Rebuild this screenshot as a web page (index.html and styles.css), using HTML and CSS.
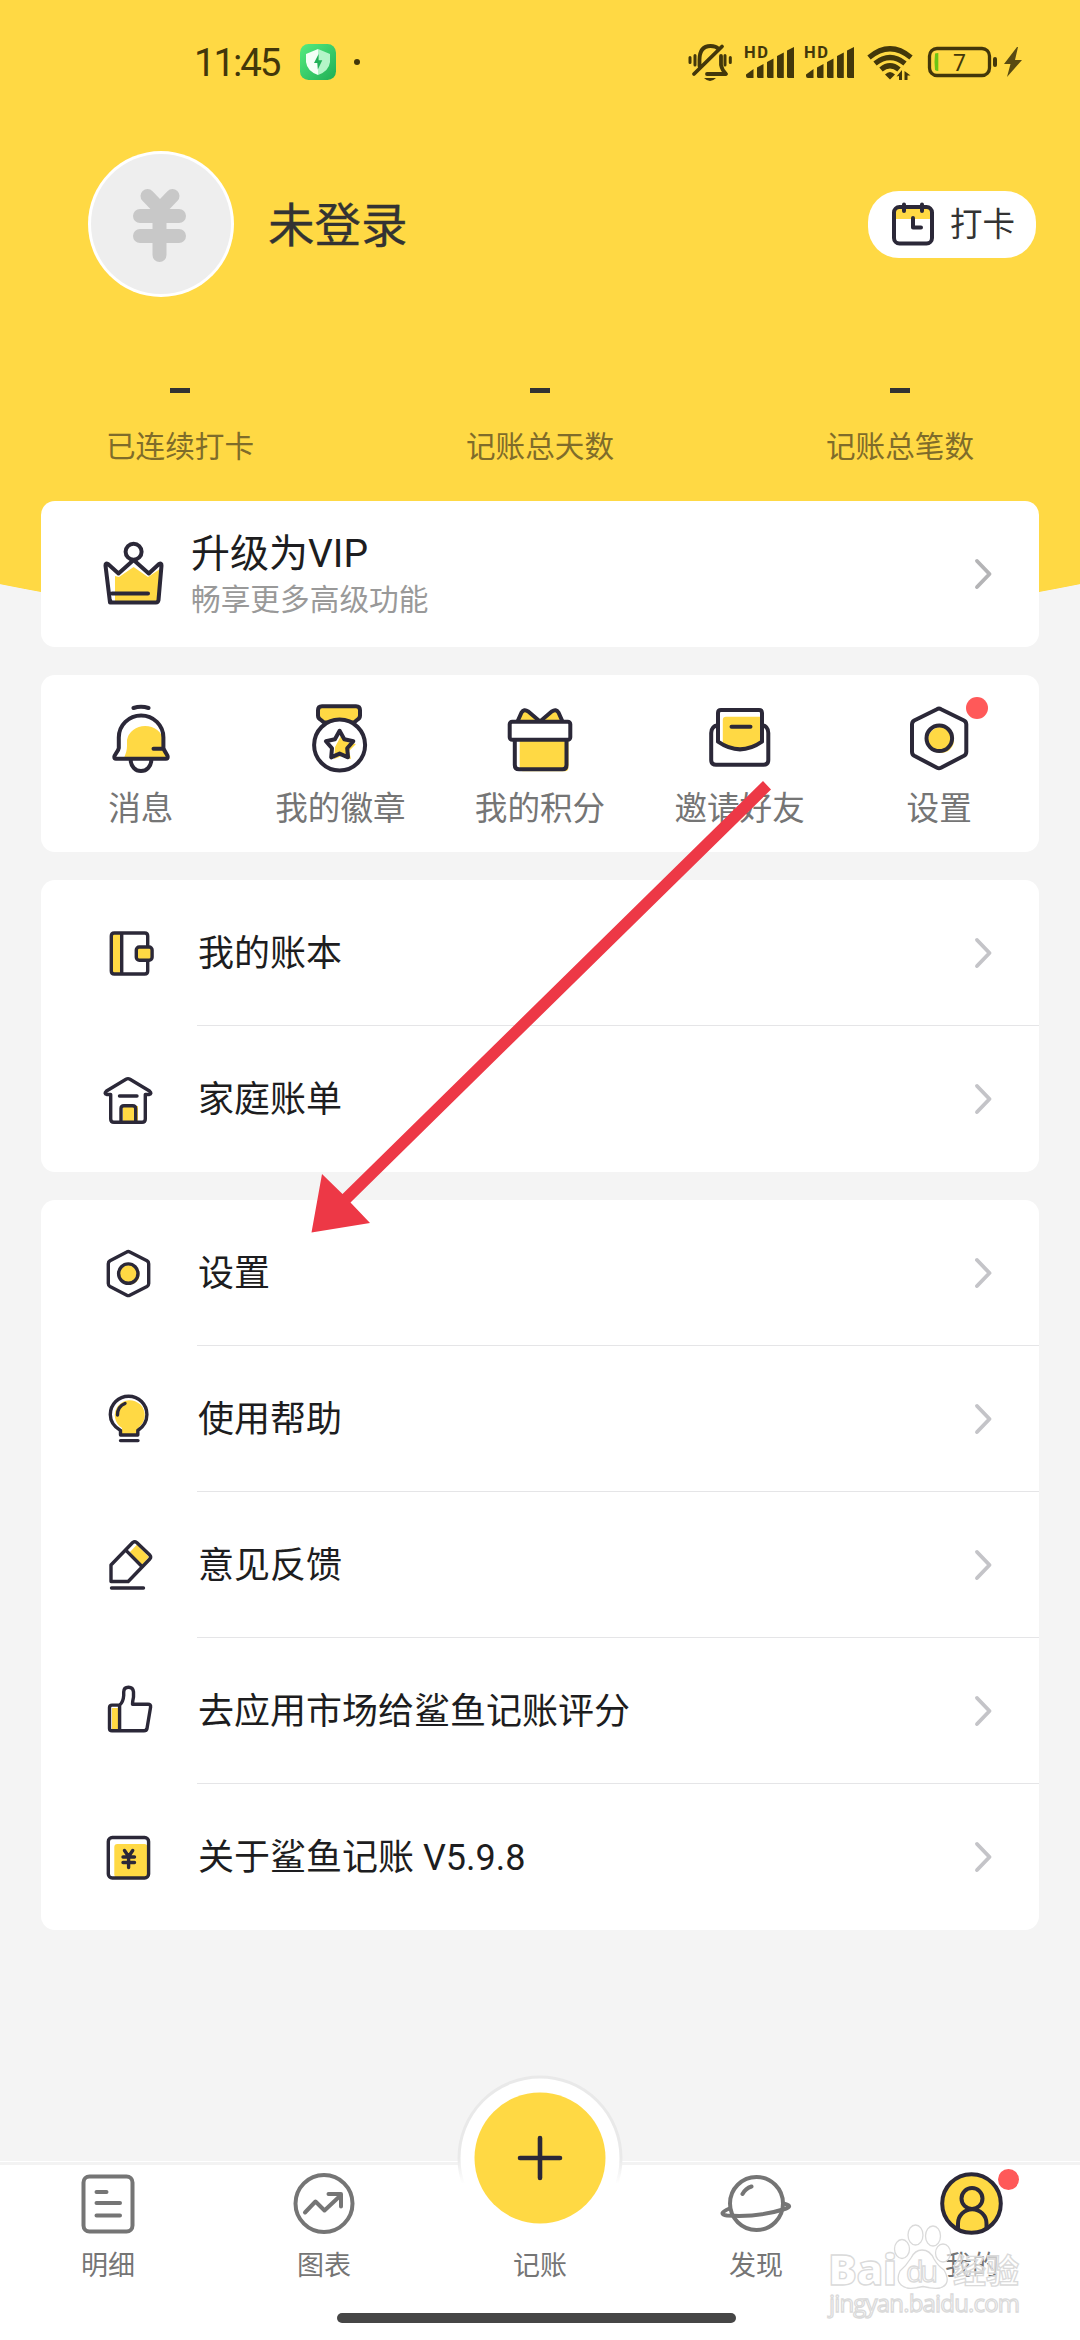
FILE: index.html
```html
<!DOCTYPE html>
<html lang="zh-CN">
<head>
<meta charset="utf-8">
<title>我的</title>
<link rel="stylesheet" href="styles.css">
</head>
<body>
<svg class="defs" width="0" height="0" aria-hidden="true">
  <symbol id="chevron" viewBox="0 0 20 34"><path d="M4 4 L16.500 17 L4 30" fill="none" stroke="currentColor" stroke-width="3.900" stroke-linecap="round" stroke-linejoin="round"/></symbol>
</svg>
<div class="page">
  <header class="status">
    <span class="time">11:45</span>
    <svg class="guard" viewBox="0 0 36 36">
      <defs><linearGradient id="g" x1="0" y1="0" x2="1" y2="1"><stop offset="0" stop-color="#55ec80"/><stop offset="1" stop-color="#1fae55"/></linearGradient></defs>
      <rect width="36" height="36" rx="8.500" fill="url(#g)"/>
      <path d="M18 5 L30 10 V18 Q29 27 18 31 Z" fill="#b4f5c8"/>
      <path d="M18 5 L6 10 V18 Q7 27 18 31 Z" fill="#f4fff7"/>
      <path d="M18.600 10 L14 19 H17.300 L17.800 25.500 L22.300 16.300 H18.600 Z" fill="#21b158"/>
    </svg>
    <i class="more"></i>
    <svg class="signals" viewBox="0 0 336 44" fill="none" stroke="#43370a" stroke-width="3.800" stroke-linecap="round" stroke-linejoin="round">
      <path d="M11.500 26 V20 Q11.500 6 22.500 6 Q28 6 30.500 9 M33 16 V25 Q34 30 38 34 H19 M6 34 L34 6.500"/>
      <path d="M2 17.500 V22.500 M7 15.500 V25 M37 15.500 V25 M42.300 17.500 V22.500" stroke-width="3"/>
      <path d="M16 38 H28 Q22 44 16 38 Z" fill="#43370a" stroke="none"/>
      <g fill="#43370a" stroke="none">
        <g id="bars">
          <text x="56" y="18" class="hd" textLength="24">HD</text>
          <path d="M58 36 V34.500 L65.500 29 V38 H60 Q58 38 58 36Z M69 37 V27.500 L75.500 24 V38 H70Z M79 37 V22 L85.500 18.500 V38 H80Z M89 37 V16 L95.800 12.500 V38 H90Z M99 37 V10.500 L106 7 V38 H100Z"/>
        </g>
        <use href="#bars" x="60"/>
      </g>
      <path d="M181 17.500 Q202 0 223 17.500 M187 23.500 Q202 11.500 217 23.500 M193 29.500 Q202 22 211 29.500" stroke-width="5.200" stroke-linecap="butt"/>
      <path d="M197 34.500 Q202 29.500 207 34.500 L202 39.500 Z M214 30 V40 H211 V36 L208.500 36.500 Z M216.500 40 V31 L222.500 35.500 H219.500 V40Z" fill="#43370a" stroke="none"/>
      <rect x="241.500" y="8.500" width="60" height="27" rx="7.500" stroke-width="3.300"/>
      <path d="M247 13.500 Q248 13 250.300 13 V31 Q248 31 247 30 Q246 22 247 13.500Z" fill="#6cc414" stroke="none"/>
      <rect x="305" y="17" width="4" height="10" rx="2" fill="#43370a" stroke="none"/>
      <text x="265" y="31" class="level">7</text>
      <path d="M329 7 L316 24 H322.500 L319 37 L334 20 H327 L330 7Z" fill="#584a12" stroke="none"/>
    </svg>
  </header>

  <section class="profile">
    <svg class="avatar" viewBox="0 0 146 146">
      <circle cx="73" cy="73" r="73" fill="#fff"/><circle cx="73" cy="73" r="70" fill="#eee"/>
      <path d="M59.500 45 L72 58 L84.500 45 M71.500 58 V104 M52 65 H91 M52 85 H91" fill="none" stroke="#c8c8c8" stroke-width="14" stroke-linecap="round"/>
    </svg>
    <h1 class="name">未登录</h1>
    <button class="checkin">
      <svg viewBox="0 0 44 46" fill="none" stroke="#2b2838" stroke-width="4" stroke-linecap="round" stroke-linejoin="round">
        <path d="M4 6 H40 V18 H4Z" fill="#ffd944" stroke="none"/>
        <rect x="3" y="6" width="38" height="36.500" rx="5.500"/>
        <path d="M13 3.500 V10 M31 3.500 V10 M22 17 V26.500 H30"/>
      </svg>
      <span>打卡</span>
    </button>
  </section>

  <section class="stats">
    <div><i></i><span>已连续打卡</span></div>
    <div><i></i><span>记账总天数</span></div>
    <div><i></i><span>记账总笔数</span></div>
  </section>

  <main class="cards">
    <section class="card vip">
      <svg class="crown" viewBox="0 0 70 70" fill="none" stroke="#2b2838" stroke-width="4" stroke-linecap="round" stroke-linejoin="round">
        <path d="M17 37 L21 38 L35.600 28 L50 38 L62 30 L60 62 H17Z" fill="#ffd944" stroke="none"/>
        <circle cx="35.600" cy="12.800" r="8"/>
        <path d="M12 63.500 L7.500 26.500 Q7.300 23.500 10 25 L20.500 34.500 L35.600 21 L50.800 34.500 L61 25 Q63.700 23.500 63.500 26.500 L60.500 61 Q60 63.500 58 63.500 H14.500 Q12.200 63.500 12 61 M14 54.500 H50"/>
      </svg>
      <div class="vip-text"><strong>升级为VIP</strong><span>畅享更多高级功能</span></div>
      <svg class="chev"><use href="#chevron"/></svg>
    </section>

    <nav class="card shortcuts">
      <a>
        <svg class="ico" viewBox="0 0 72 72">
          <path d="M22 44 V38 A18.400 16.500 0 0 1 58.400 38 V47 L62 56 H19 C21 51 22 48 22 44Z" class="y"/>
          <path d="M28.500 6 Q36 3.500 43.500 6 M13.800 46 V35.500 A22.300 22 0 0 1 58.400 35.500 V46 C59 49 62.700 52.500 62.700 54.800 Q62.700 56.800 61 56.800 H11 Q9.300 56.800 9.300 54.800 C9.300 52.500 13.500 49 13.800 46Z M25.700 58 A10.300 11 0 0 0 46.300 58 M48.500 46.700 H58"/>
        </svg><span>消息</span>
      </a>
      <a>
        <svg class="ico" viewBox="0 0 72 72">
          <path d="M18 4.300 H52 Q56 4.300 56 8.300 V13.500 Q56 16.500 53 18 L50 20.500 H20 L17 18 Q14 16.500 14 13.500 V8.300 Q14 4.300 18 4.300Z" class="yl"/>
          <circle cx="35.600" cy="43" r="25.500" fill="#fff"/>
          <path d="M38 32 L43 40 L52 42 L45 49 L47 57 L38 54 L30 57 L31 45Z" class="y"/>
          <path d="M35.600 28.800 L40.300 37.200 L49.300 39.200 L43.200 46.200 L44 55.300 L35.600 51.600 L27.200 55.300 L28 46.200 L21.900 39.200 L30.900 37.200 Z"/>
        </svg><span>我的徽章</span>
      </a>
      <a>
        <svg class="ico" viewBox="0 0 72 72">
          <path d="M15.700 38 H64.500 V65 Q64.500 69.300 61 69.300 H19 Q15.700 69.300 15.700 66Z" class="y"/>
          <path d="M13.500 19.500 L17.500 10.500 Q20 6.500 24 9.300 L36 19.500 L48 9.300 Q52 6.500 54.500 10.500 L58.500 19.500" class="yl"/>
          <rect x="5.700" y="19.700" width="60.600" height="18" rx="2.500" fill="#fff"/>
          <path d="M10.800 38 V63 Q10.800 67.300 15 67.300 H58.500 Q62.500 67.300 62.500 63 V38"/>
        </svg><span>我的积分</span>
      </a>
      <a>
        <svg class="ico" viewBox="0 0 72 72">
          <path d="M18.800 18 Q18.800 14.700 22 14.700 H58 V40 Q38 52 18.800 43Z" class="y"/>
          <path d="M14 39.700 V11 Q14 8 17 8 H55 Q58 8 58 11 V39.700 Q36 55 14 39.700Z M14 23 Q7.200 24.500 7.200 31 V58 Q7.200 62.700 12 62.700 H59.500 Q64.300 62.700 64.300 58 V31 Q64.300 24.500 58 23 M27.500 24.700 H46.500"/>
        </svg><span>邀请好友</span>
      </a>
      <a>
        <svg class="ico" viewBox="0 0 72 72">
          <circle cx="38" cy="38" r="13" class="y"/>
          <path d="M34 7.200 Q36 6 38 7.200 L61 18.500 Q63.300 19.700 63.300 22.500 V49.700 Q63.300 52.500 61 53.800 L38 65.700 Q36 66.700 34 65.700 L11.200 53.800 Q9 52.500 9 49.700 V22.500 Q9 19.700 11.200 18.500Z"/>
          <circle cx="36.300" cy="36.300" r="12.800"/>
        </svg><i class="badge"></i><span>设置</span>
      </a>
    </nav>

    <section class="card list">
      <a class="row">
        <svg class="ico" viewBox="0 0 56 56">
          <path d="M10 8 H20.700 V50 H12 Q10 50 10 47Z" class="y"/>
          <path d="M46.700 22 V11 Q46.700 8 43.700 8 H13.300 Q10.300 8 10.300 11 V46 Q10.300 49 13.300 49 H43.700 Q46.700 49 46.700 46 V35 M20.700 8 V49"/>
          <rect x="35.300" y="22" width="15.800" height="13.300" rx="3" class="yl"/>
        </svg><div class="label"><span>我的账本</span><svg class="chev"><use href="#chevron"/></svg></div>
      </a>
      <a class="row">
        <svg class="ico" viewBox="0 0 56 56">
          <path d="M22 35 H37 V51 H22Z" class="y"/>
          <path d="M9.700 23.500 H6 Q2.500 22.800 5.500 20 L25 8.200 Q27 7 29 8.200 L48.500 20 Q51.500 22.800 48 23.500 H44.300 V48 Q44.300 51.300 41 51.300 H13 Q9.700 51.300 9.700 48Z M18.500 25 H36 M20 51 V37.500 Q20 34.700 23 34.700 H31.500 Q34.700 34.700 34.700 37.500 V51"/>
        </svg><div class="label"><span>家庭账单</span><svg class="chev"><use href="#chevron"/></svg></div>
      </a>
    </section>

    <section class="card list">
      <a class="row">
        <svg class="ico" viewBox="0 0 56 56">
          <circle cx="28.500" cy="29.800" r="10" class="y"/>
          <path d="M25.800 7 Q27.300 6 28.800 7 L46 15.700 Q47.700 16.700 47.700 18.700 V38.500 Q47.700 40.500 46 41.500 L28.800 50.200 Q27.300 51 25.800 50.200 L9 41.500 Q7.300 40.500 7.300 38.500 V18.700 Q7.300 16.700 9 15.700Z"/>
          <circle cx="27.300" cy="28.600" r="9.700"/>
        </svg><div class="label"><span>设置</span><svg class="chev"><use href="#chevron"/></svg></div>
      </a>
      <a class="row">
        <svg class="ico" viewBox="0 0 56 56">
          <path d="M21 44 V37 A15 15 0 1 1 38 36 L36 44Z" class="y"/>
          <path d="M19.500 44 V39.500 Q9.300 33.500 9.300 23.500 A18.300 18.300 0 0 1 45.900 23.500 Q45.900 33.500 36.800 39.500 V44 Z M19.500 49.600 H37 M16.500 24 Q16.500 15.500 24 12.500"/>
        </svg><div class="label"><span>使用帮助</span><svg class="chev"><use href="#chevron"/></svg></div>
      </a>
      <a class="row">
        <svg class="ico" viewBox="0 0 56 56">
          <path d="M29 15 L36 7.500 L48 20 L40.200 28.800Z" class="y"/>
          <path d="M10 44.500 V28 L31.700 5.500 Q33.700 4 35.700 5.500 L48.800 18 Q50.500 20 48.800 22 L27.200 44.500 Z M25.500 13.900 L40.200 28.800 M10.500 51 H42.500"/>
        </svg><div class="label"><span>意见反馈</span><svg class="chev"><use href="#chevron"/></svg></div>
      </a>
      <a class="row">
        <svg class="ico" viewBox="0 0 56 56">
          <path d="M11 25 H18.600 V47.700 H11Z" class="y"/>
          <path d="M18.600 22.100 H11 Q8.500 22.100 8.500 24.500 V45.500 Q8.500 47.700 11 47.700 H43 Q45.500 47.700 46 45.500 L49.600 24 Q50 21.300 47 21.300 H31.500 Q31.500 18.500 32.500 14 V9 Q32 4.200 27.500 4.200 Q22.800 4.200 22.700 9 V12.500 Q22.300 19 18.600 22.100 V47.700"/>
        </svg><div class="label"><span>去应用市场给鲨鱼记账评分</span><svg class="chev"><use href="#chevron"/></svg></div>
      </a>
      <a class="row">
        <svg class="ico" viewBox="0 0 56 56">
          <rect x="13.300" y="15" width="33" height="33.500" rx="3" class="y"/>
          <rect x="7.300" y="8.500" width="40.300" height="40.500" rx="4"/>
          <path d="M23.500 21.500 L27.600 27.500 L31.700 21.500 M27.600 27.500 V38.500 M22 28 H33.500 M22 33.500 H33.500"/>
        </svg><div class="label"><span>关于鲨鱼记账 V5.9.8</span><svg class="chev"><use href="#chevron"/></svg></div>
      </a>
    </section>
  </main>

  <footer class="tabs">
    <a>
      <svg viewBox="0 0 72 64"><rect x="11.500" y="4.500" width="49" height="55" rx="6"/><path d="M24.500 20 H34.500 M24.500 31 H48 M24.500 43.500 H48"/></svg>
      <span>明细</span>
    </a>
    <a>
      <svg viewBox="0 0 72 64"><circle cx="36" cy="31.500" r="28.500"/><path d="M17 40.500 L27.500 29.500 L36.500 38.500 L53 23 M40.500 22 H53 V34.500"/></svg>
      <span>图表</span>
    </a>
    <a class="add">
      <svg class="fab" viewBox="0 0 170 170">
        <defs><linearGradient id="fade" x1="0" y1="0" x2="0" y2="1"><stop offset=".5" stop-color="#e9e9e9"/><stop offset=".66" stop-color="#fff"/></linearGradient></defs>
        <circle cx="85" cy="85" r="81" fill="#fff" stroke="url(#fade)" stroke-width="3"/>
        <circle cx="85" cy="85" r="65.500" fill="#ffd944" stroke="none"/>
        <path d="M65 85 H105 M85 65 V105" stroke="#2b2838" stroke-width="4.600"/>
      </svg>
      <svg viewBox="0 0 72 64"></svg>
      <span>记账</span>
    </a>
    <a>
      <svg viewBox="0 0 72 64"><circle cx="36.500" cy="31.500" r="26.500"/><path d="M22.500 22 Q25.500 16.500 31.500 14.500 M9.500 36.500 Q-3 42 7 43.500 Q38 45.500 63 37.500 Q75 34 63.500 31.500"/></svg>
      <span>发现</span>
    </a>
    <a class="on">
      <svg viewBox="0 0 72 64"><circle cx="35.500" cy="31.500" r="29.300" fill="#ffd944"/><circle cx="36" cy="26.500" r="10.500"/><path d="M22 55.500 V51.500 A14 14 0 0 1 50.500 51.500 V55.500"/></svg>
      <i class="badge"></i>
      <span>我的</span>
    </a>
  </footer>
  <div class="home"></div>

  <svg class="arrow" viewBox="0 0 470 460"><path d="M453 3 L32.500 416 L12 396 L1.500 454.500 L60 445 L40.500 424.500 L461 11.500Z" fill="#ed3846"/></svg>

  <svg class="mark" viewBox="0 0 200 110" fill="#fff" fill-opacity=".6" stroke="#dadada" stroke-width="1.300">
    <text x="4" y="61" class="bai" textLength="69">Bai</text>
    <ellipse cx="78" cy="25" rx="7.500" ry="9.500"/><ellipse cx="91.500" cy="11" rx="7.500" ry="10"/><ellipse cx="109" cy="12" rx="7.500" ry="10"/><ellipse cx="119" cy="29" rx="7.500" ry="9"/>
    <path d="M98 26 Q106 26 110 35 Q114 42 120 46 Q128 60 116 64 Q109 65 99 62.500 Q89 65 83 64 Q70 60 76 47 Q82 42 87 34 Q91 26 98 26Z"/>
    <text x="82" y="58" class="du" textLength="32">du</text>
    <text x="129" y="59" class="jy" textLength="66">经验</text>
    <text x="5" y="88" class="url" textLength="191">jingyan.baidu.com</text>
  </svg>
</div>
</body>
</html>
```
FILE: styles.css
```css
* { box-sizing: border-box; margin: 0; padding: 0; }

body {
  font-family: Roboto, "Noto Sans CJK SC", sans-serif;
  color: #1d1d20;
  background: #f4f4f4;
}

.defs { position: absolute; }

.page {
  position: relative;
  z-index: 0;
  display: flex;
  flex-direction: column;
  width: 1080px;
  height: 2340px;
  overflow: hidden;
  background: radial-gradient(circle 2754px at 540px -2116px, #ffd944 99.97%, #f4f4f4 100%);
}

/* status bar */
.status {
  display: flex;
  align-items: center;
  height: 124px;
  padding: 0 56px 0 194px;
}
.time {
  width: 106px;
  padding-top: 1px;
  font-size: 38.5px;
  line-height: 44px;
  letter-spacing: -2.1px;
  color: #43370a;
}
.guard { width: 36px; height: 36px; }
.more {
  width: 6px;
  height: 6px;
  margin-left: 18px;
  border-radius: 50%;
  background: #43370a;
}
.signals { width: 336px; height: 44px; margin-left: auto; }
.hd { font-size: 16.5px; font-weight: 700; }
.level { font-size: 23px; fill: #43370a; stroke: none; }

/* profile */
.profile {
  display: flex;
  align-items: center;
  height: 200px;
  padding: 0 44px 0 88px;
}
.avatar { width: 146px; height: 146px; }
.name {
  margin-left: 34px;
  padding-top: 3px;
  font-size: 46.5px;
  font-weight: 400;
  line-height: 60px;
  color: #333;
  -webkit-text-stroke: .3px #333;
}
.checkin {
  display: flex;
  align-items: center;
  gap: 15px;
  width: 168px;
  height: 67px;
  margin-left: auto;
  padding-left: 23px;
  border: 0;
  border-radius: 31px;
  background: #fff;
  font: inherit;
  font-size: 32.5px;
  color: #333;
}
.checkin svg { width: 44px; height: 46px; }
.checkin span { padding-bottom: 5px; }

/* counters */
.stats { display: flex; height: 177px; padding-top: 64px; }
.stats div { display: flex; flex: 1; flex-direction: column; align-items: center; }
.stats i { width: 20px; height: 5px; background: #333; }
.stats span {
  margin-top: 34px;
  font-size: 29.6px;
  line-height: 40px;
  color: #7f6c2a;
}

/* cards */
.cards {
  display: flex;
  flex: 1;
  flex-direction: column;
  gap: 28px;
  padding: 0 41px;
}
.card { border-radius: 14px; background: #fff; }
.chev { width: 20px; height: 34px; color: #c4c4c8; }

.vip { display: flex; align-items: center; height: 146px; padding: 0 46px 0 57px; }
.vip .chev { color: #b4b4b6; }
.crown { width: 70px; height: 70px; }
.vip-text { display: flex; flex: 1; flex-direction: column; margin-left: 23px; padding-top: 2px; }
.vip-text strong { font-size: 39px; font-weight: 400; line-height: 50px; }
.vip-text span { font-size: 29.7px; line-height: 42px; color: #999; }

.shortcuts { display: flex; height: 177px; padding-top: 27px; }
.shortcuts a {
  position: relative;
  display: flex;
  flex: 1;
  flex-direction: column;
  align-items: center;
}
.shortcuts .ico { width: 72px; height: 72px; }
.shortcuts span { margin-top: 11px; font-size: 32.6px; line-height: 48px; color: #757575; }
.ico { fill: none; stroke: #2b2838; stroke-width: 4; stroke-linecap: round; stroke-linejoin: round; }
.ico .y { fill: #ffd944; stroke: none; }
.ico .yl { fill: #ffd944; }

.badge {
  position: absolute;
  width: 22px;
  height: 22px;
  border-radius: 50%;
  background: #ff5959;
}
.shortcuts .badge { top: -5px; left: 127px; }

.row { display: flex; align-items: center; height: 146px; padding-left: 60px; }
.row .ico { width: 56px; height: 56px; stroke-width: 3.4; }
.label {
  display: flex;
  flex: 1;
  align-items: center;
  justify-content: space-between;
  height: 146px;
  margin-left: 40px;
  padding: 0 46px 0 0;
  border-bottom: 1px solid #e5e5e7;
  font-size: 36px;
  text-indent: 1px;
}
.label span { padding-bottom: 6px; }
.row:last-child .label { border-bottom: 0; }

/* bottom tabs */
.tabs {
  display: flex;
  height: 139px;
  padding-top: 7px;
  border-top: 3px solid #f3f3f3;
  outline: 1px solid #fff;
  background: #fff;
}
.tabs a {
  position: relative;
  display: flex;
  flex: 1;
  flex-direction: column;
  align-items: center;
}
.tabs svg {
  width: 72px;
  height: 64px;
  fill: none;
  stroke: #757575;
  stroke-width: 4;
  stroke-linecap: round;
  stroke-linejoin: round;
}
.tabs span { margin-top: 10px; font-size: 27px; line-height: 40px; color: #757575; }
.tabs .fab { position: absolute; top: -99px; width: 170px; height: 170px; }
.tabs .on svg { stroke: #2b2838; }
.tabs .badge { top: -3px; left: 134px; width: 21px; height: 21px; }
.home {
  width: 399px;
  height: 10px;
  margin: 12px 0 17px 337px;
  border-radius: 5px;
  background: #464646;
}
.page::after {
  position: absolute;
  z-index: -1;
  right: 0;
  bottom: 0;
  left: 0;
  height: 39px;
  background: #fff;
  content: "";
}

/* overlays */
.arrow { position: absolute; top: 778px; left: 310px; width: 470px; height: 460px; }
.mark { position: absolute; top: 2224px; left: 824px; width: 200px; height: 110px; }
.bai { font: 800 43px "Open Sans", "Liberation Sans", sans-serif; }
.du { font: 400 29px "Open Sans", "Liberation Sans", sans-serif; }
.jy { font: 700 33px "Noto Sans CJK SC", sans-serif; }
.url { font: 400 24px "Open Sans", "Liberation Sans", sans-serif; }
```
